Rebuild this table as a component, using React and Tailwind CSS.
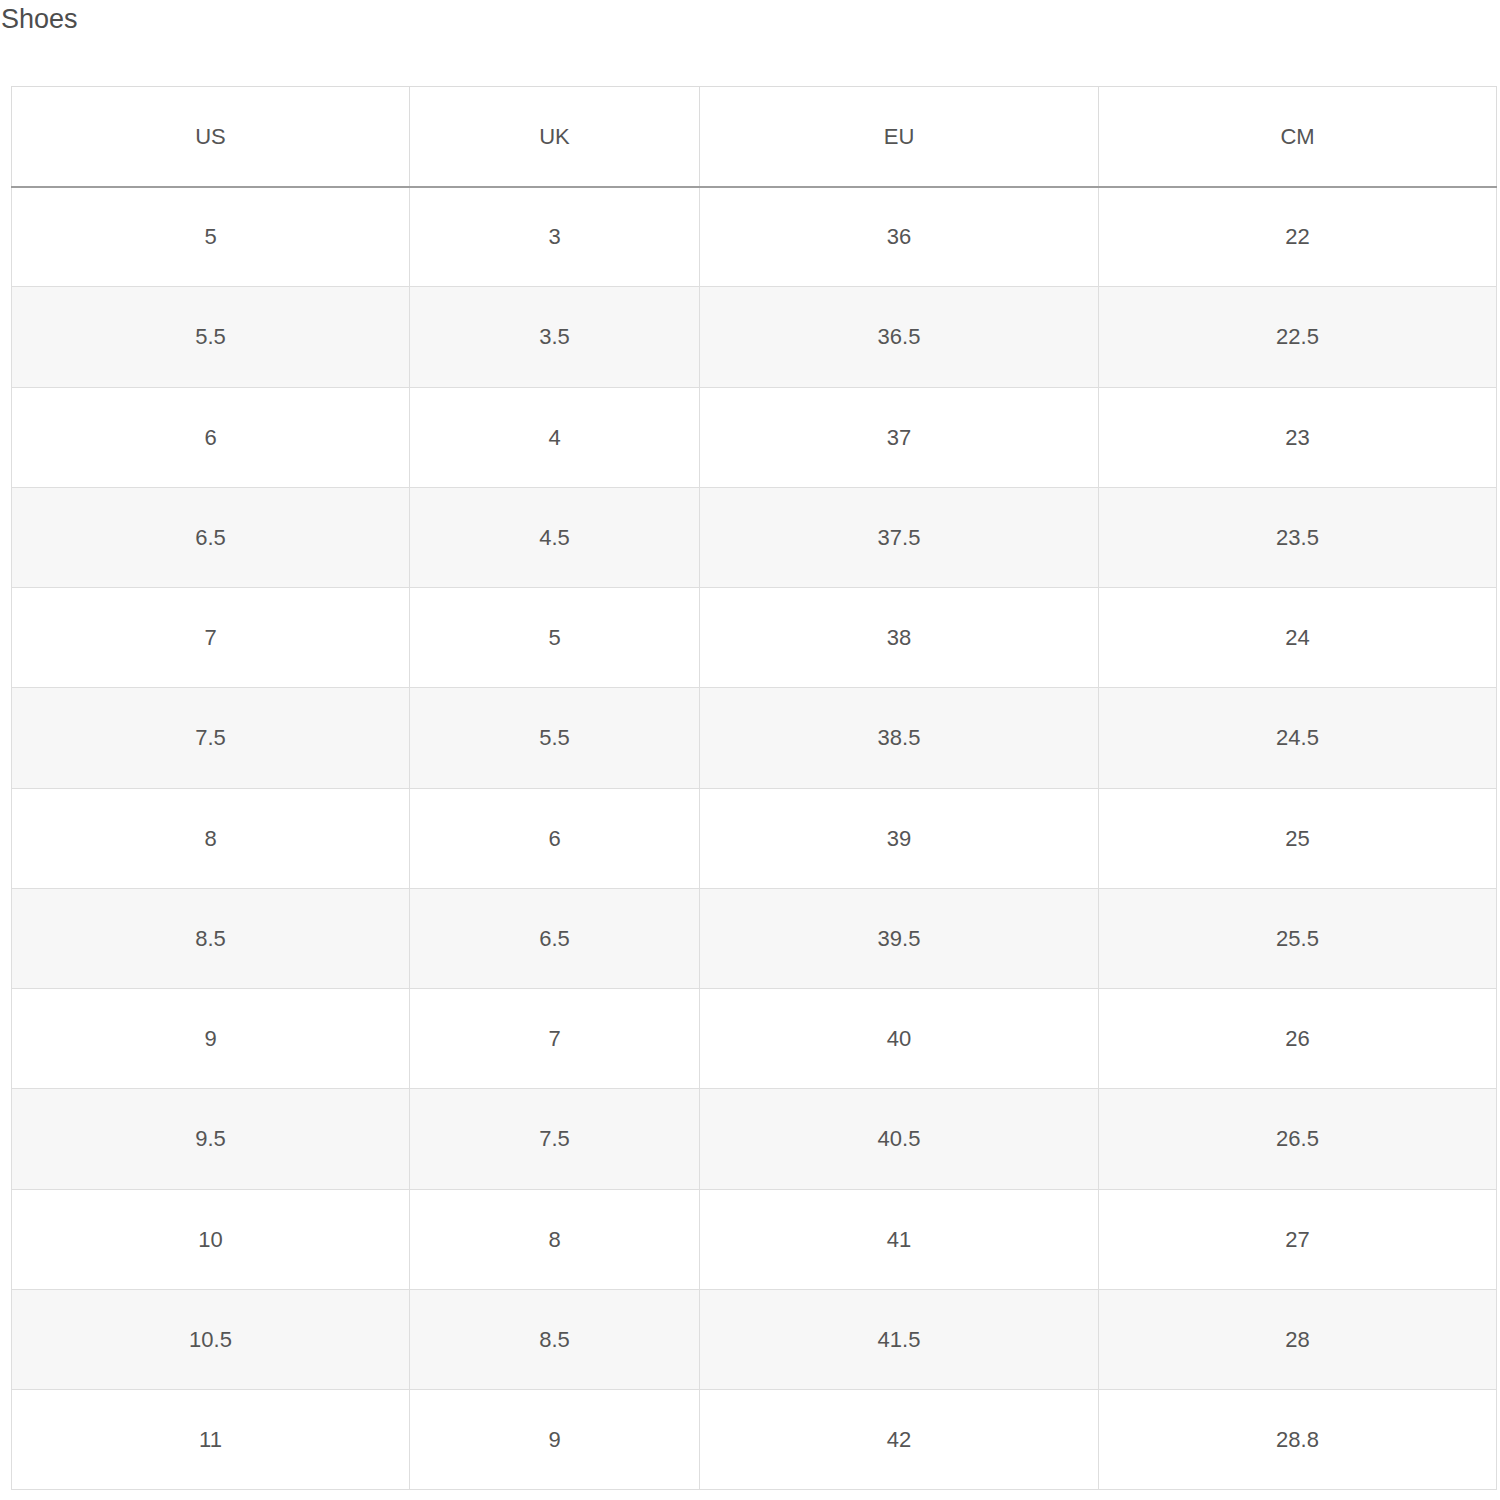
import React from 'react';

const rows = [
    ['5', '3', '36', '22'],
    ['5.5', '3.5', '36.5', '22.5'],
    ['6', '4', '37', '23'],
    ['6.5', '4.5', '37.5', '23.5'],
    ['7', '5', '38', '24'],
    ['7.5', '5.5', '38.5', '24.5'],
    ['8', '6', '39', '25'],
    ['8.5', '6.5', '39.5', '25.5'],
    ['9', '7', '40', '26'],
    ['9.5', '7.5', '40.5', '26.5'],
    ['10', '8', '41', '27'],
    ['10.5', '8.5', '41.5', '28'],
    ['11', '9', '42', '28.8'],
];

const headers = ['US', 'UK', 'EU', 'CM'];
const widths = ['w-[398px]', 'w-[290px]', 'w-[399px]', 'w-[398px]'];

const SizeChart = () => {
    return (
        <div className="w-[1500px] min-h-[1500px] bg-white font-['Liberation_Sans',Arial,sans-serif] text-[#555]">
            <h2 className="text-[27px] leading-[32px] text-[#4d4d4d] pl-[1px] pt-[3px]">Shoes</h2>

            <table className="ml-[11px] mt-[51px] border-collapse table-fixed w-[1485px] border border-[#dcdcdc]">
                <thead>
                    <tr>
                        {headers.map((h, i) => (
                            <th
                                key={h}
                                className={`${widths[i]} h-[100px] font-normal text-[22px] text-[#555] border-x border-[#dcdcdc] border-b-2 border-b-[#9e9e9e] text-center`}
                            >
                                {h}
                            </th>
                        ))}
                    </tr>
                </thead>
                <tbody>
                    {rows.map((row, r) => (
                        <tr key={r} className={r % 2 === 1 ? 'bg-[#f7f7f7]' : 'bg-white'}>
                            {row.map((v, c) => (
                                <td
                                    key={c}
                                    className="h-[100.25px] text-center text-[22px] border border-[#dedede]"
                                >
                                    {v}
                                </td>
                            ))}
                        </tr>
                    ))}
                </tbody>
            </table>
        </div>
    );
};

export default SizeChart;
